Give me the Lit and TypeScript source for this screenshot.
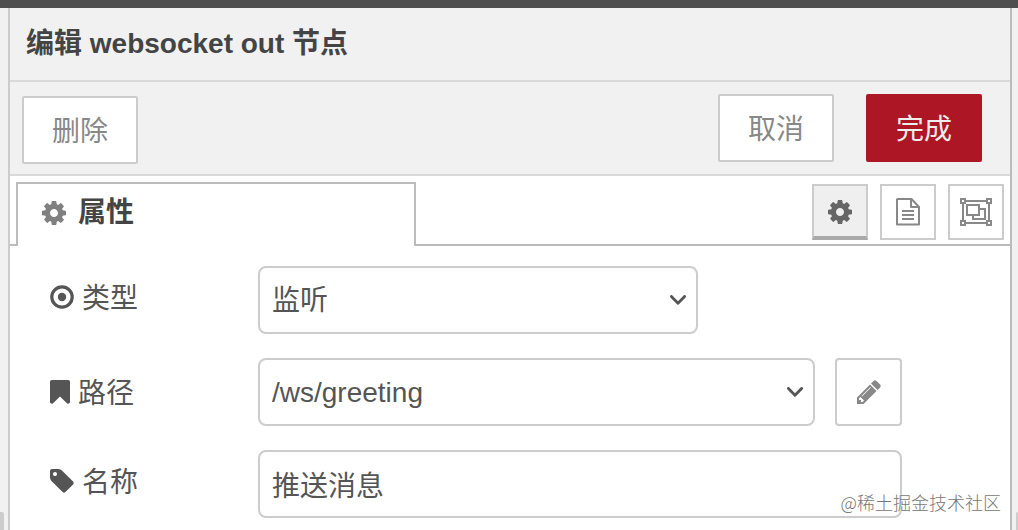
import { LitElement, html, css, svg } from "lit";
import { customElement, property, state } from "lit/decorators.js";

const cog = svg`<path d="M1152 896q0-106-75-181t-181-75-181 75-75 181 75 181 181 75 181-75 75-181zm512-109v222q0 12-8 23t-20 13l-185 28q-19 54-39 91 35 50 107 138 10 12 10 25t-9 23q-27 37-99 108t-94 71q-12 0-26-9l-138-108q-44 23-91 38-16 136-29 186-7 28-36 28h-222q-14 0-24.5-8.5t-11.5-21.5l-28-184q-49-16-90-37l-141 107q-10 9-25 9-14 0-25-11-126-114-165-168-7-10-7-23 0-12 8-23 15-21 51-66.5t54-70.5q-27-50-41-99l-183-27q-13-2-21-12.5t-8-23.5v-222q0-12 8-23t19-13l186-28q14-46 39-92-40-57-107-138-10-12-10-24 0-10 9-23 26-36 98.5-107.5t94.5-71.5q13 0 26 10l138 107q44-23 91-38 16-136 29-186 7-28 36-28h222q14 0 24.5 8.5t11.5 21.5l28 184q49 16 90 37l142-107q9-9 24-9 13 0 25 10 129 119 165 170 7 8 7 22 0 12-8 23-15 21-51 66.5t-54 70.5q26 50 41 98l183 28q13 2 21 12.5t8 23.5z"/>`;

const icons: Record<string, { box: string; w: number; h: number; body: unknown }> = {
  cog: { box: "128 128 1536 1536", w: 24, h: 24, body: cog },
  target: {
    box: "0 0 24 24", w: 24, h: 24,
    body: svg`<circle cx="12" cy="12" r="10.2" fill="none" stroke="currentColor" stroke-width="3.2"/><circle cx="12" cy="12" r="4.2"/>`,
  },
  bookmark: {
    box: "256 128 1280 1536", w: 20, h: 24,
    body: svg`<path d="M1420 128q23 0 44 9 33 13 52.5 41t19.5 62v1289q0 34-19.5 62t-52.5 41q-19 8-44 8-48 0-83-32l-441-424-441 424q-36 33-83 33-23 0-44-9-33-13-52.5-41t-19.5-62v-1289q0-34 19.5-62t52.5-41q21-9 44-9h1048z"/>`,
  },
  tag: {
    box: "128 128 1536 1536", w: 24, h: 24,
    body: svg`<path d="M576 448q0-53-37.5-90.5t-90.5-37.5-90.5 37.5-37.5 90.5 37.5 90.5 90.5 37.5 90.5-37.5 37.5-90.5zm1067 576q0 53-37 90l-491 492q-39 37-91 37-53 0-90-37l-715-716q-38-37-64.5-101t-26.5-117v-416q0-52 38-90t90-38h416q53 0 117 26.5t102 64.5l715 714q37 39 37 91z"/>`,
  },
  pencil: {
    box: "128 128 1536 1536", w: 24, h: 24,
    body: svg`<path d="M491 1536l91-91-235-235-91 91v107h128v128h107zm523-928q0-22-22-22-10 0-17 7l-542 542q-7 7-7 17 0 22 22 22 10 0 17-7l542-542q7-7 7-17zm-54-192l416 416-832 832h-416v-416zm683 96q0 53-37 90l-166 166-416-416 166-165q36-38 90-38 53 0 91 38l235 234q37 39 37 91z"/>`,
  },
  file: {
    box: "0 0 24 28", w: 24, h: 28,
    body: svg`<path fill="none" stroke="currentColor" stroke-width="2" stroke-linejoin="round" d="M1 1.5V26.5H23V9L15.5 1H1.5zM15 1.5V9H22.5"/><path d="M6 12h12v2H6zM6 16h12v2H6zM6 20h12v2H6z"/>`,
  },
  group: {
    box: "0 0 32 28", w: 32, h: 28,
    body: svg`<g fill="none" stroke="currentColor" stroke-width="2"><path d="M6 3H26M6 25H26M3 6V22M29 6V22"/><path d="M1 1h4v4H1zM27 1h4v4h-4zM1 23h4v4H1zM27 23h4v4h-4z"/><path d="M7 7H19V17H7zM19 11H25V21H13V17"/></g>`,
  },
  chevron: {
    box: "0 0 16 10", w: 16, h: 10,
    body: svg`<path fill="none" stroke="currentColor" stroke-width="2.8" stroke-linecap="round" stroke-linejoin="round" d="M1.4 1.4L8 8.2L14.6 1.4"/>`,
  },
};

@customElement("ui-icon")
class UiIcon extends LitElement {
  @property() name = "cog";

  static styles = css`
    :host { display: inline-flex; flex: none; }
    svg { display: block; fill: currentColor; }
  `;

  render() {
    const i = icons[this.name];
    return html`<svg width=${i.w} height=${i.h} viewBox=${i.box} aria-hidden="true">${i.body}</svg>`;
  }
}

@customElement("app-root")
class AppRoot extends LitElement {
  @state() private panel = "properties";

  static styles = css`
    :host {
      display: flex;
      flex-direction: column;
      position: relative;
      height: 100vh;
      overflow: hidden;
      box-sizing: border-box;
      border-top: 8px solid #4f4f4f;
      background: #f1f1f1;
      color: #555;
      font-family: "Liberation Sans", "Noto Sans CJK SC", sans-serif;
      font-size: 28px;
      line-height: 40px;
      font-weight: 400;
    }
    * { box-sizing: border-box; }
    button, select, input { font: inherit; color: inherit; margin: 0; }
    .workspace { flex: 1; display: flex; min-height: 0; }
    .gutter { flex: none; display: flex; flex-direction: column; justify-content: flex-end; }
    .left { width: 8px; }
    .right { width: 6px; align-items: flex-end; }
    .edge { width: 4px; height: 18px; background: #ccc; border-radius: 0 2px 0 0; }
    .right .edge { width: 2px; }
    .tray {
      flex: 1;
      min-width: 0;
      display: flex;
      flex-direction: column;
      border-left: 2px solid #ccc;
      border-right: 2px solid #bbb;
      background: #fff;
    }
    .title {
      flex: none;
      margin: 0;
      padding: 16px;
      font-size: 28px;
      font-weight: 700;
      color: #444;
      background: #f1f1f1;
      border-bottom: 2px solid #d9d9d9;
    }
    .toolbar {
      flex: none;
      display: flex;
      justify-content: space-between;
      min-height: 94px;
      padding: 12px 28px 10px 12px;
      background: #f1f1f1;
      border-bottom: 2px solid #d9d9d9;
    }
    .remove { align-self: flex-end; }
    .actions { display: flex; gap: 32px; align-items: flex-start; }
    .btn {
      width: 116px;
      height: 68px;
      padding: 4px 0 0;
      border: 2px solid #ccc;
      border-radius: 2px;
      background: #fff;
      color: #888;
    }
    .primary { background: #ad1625; border-color: #ad1625; color: #eee; }
    .tabs { flex: none; display: flex; height: 70px; padding-top: 6px; }
    .lead { width: 6px; border-bottom: 2px solid #bbb; }
    .tab {
      display: flex;
      align-items: center;
      gap: 12px;
      width: 400px;
      padding: 0 24px 4px;
      border: 2px solid #bbb;
      border-bottom: 0;
      background: #fff;
      color: #444;
      font-weight: 700;
    }
    .tab ui-icon { color: #808080; }
    .tools {
      flex: 1;
      display: flex;
      justify-content: flex-end;
      gap: 12px;
      padding: 2px 6px 0 0;
      border-bottom: 2px solid #bbb;
    }
    .tool {
      display: flex;
      align-items: center;
      justify-content: center;
      width: 56px;
      height: 56px;
      padding: 0;
      border: 2px solid #ccc;
      background: #fff;
      color: #888;
    }
    .tool.on { background: #efefef; border-bottom: 4px solid #aaa; color: #666; padding-top: 2px; }
    .form { display: flex; flex-direction: column; gap: 24px; padding: 20px 40px; }
    .row { display: flex; align-items: center; }
    .label {
      flex: none;
      display: flex;
      align-items: center;
      gap: 8px;
      width: 208px;
      padding-bottom: 6px;
    }
    .label span { padding-top: 4px; }
    .compound .label { padding-bottom: 0; }
    .control { display: flex; gap: 20px; width: 70%; }
    .picker { flex: 1; display: grid; align-items: center; }
    .short { flex: 0 1 440px; }
    .picker > * { grid-area: 1 / 1; }
    .picker ui-icon { justify-self: end; margin-right: 12px; pointer-events: none; }
    .field {
      width: 100%;
      height: 68px;
      padding: 0 12px;
      border: 2px solid #ccc;
      border-radius: 8px;
      background: #fff;
      appearance: none;
      outline: 0;
    }
    select.field { padding-top: 2px; }
    .edit {
      display: flex;
      align-items: center;
      justify-content: center;
      flex: none;
      width: 67px;
      height: 68px;
      padding: 0;
      border: 2px solid #ccc;
      border-radius: 4px;
      background: #fff;
      color: #888;
    }
    .mark {
      position: absolute;
      right: 17px;
      bottom: 14px;
      font: 300 18px/28px "Noto Sans CJK SC", sans-serif;
      color: #777;
      text-shadow: 0 0 2px #fff;
    }
  `;

  private tool(id: string, icon: string, label: string) {
    return html`<button
      class="tool ${this.panel === id ? "on" : ""}"
      aria-label=${label}
      @click=${() => (this.panel = id)}
    ><ui-icon name=${icon}></ui-icon></button>`;
  }

  render() {
    return html`
      <div class="workspace">
        <div class="gutter left"><div class="edge"></div></div>
        <main class="tray">
          <h1 class="title">编辑 websocket out 节点</h1>
          <div class="toolbar">
            <button class="btn remove">删除</button>
            <div class="actions">
              <button class="btn">取消</button>
              <button class="btn primary">完成</button>
            </div>
          </div>
          <div class="tabs">
            <div class="lead"></div>
            <div class="tab"><ui-icon name="cog"></ui-icon><span>属性</span></div>
            <div class="tools">
              ${this.tool("properties", "cog", "属性")}
              ${this.tool("description", "file", "描述")}
              ${this.tool("appearance", "group", "外观")}
            </div>
          </div>
          <form class="form" @submit=${(e: Event) => e.preventDefault()}>
            <div class="row">
              <label class="label" for="type"><ui-icon name="target"></ui-icon><span>类型</span></label>
              <div class="control">
                <div class="picker short">
                  <select class="field" id="type"><option>监听</option></select>
                  <ui-icon name="chevron"></ui-icon>
                </div>
              </div>
            </div>
            <div class="row compound">
              <label class="label" for="path"><ui-icon name="bookmark"></ui-icon><span>路径</span></label>
              <div class="control">
                <div class="picker">
                  <select class="field" id="path"><option>/ws/greeting</option></select>
                  <ui-icon name="chevron"></ui-icon>
                </div>
                <button class="edit" type="button" aria-label="编辑"><ui-icon name="pencil"></ui-icon></button>
              </div>
            </div>
            <div class="row">
              <label class="label" for="name"><ui-icon name="tag"></ui-icon><span>名称</span></label>
              <div class="control">
                <input class="field" id="name" type="text" value="推送消息" />
              </div>
            </div>
          </form>
        </main>
        <div class="gutter right"><div class="edge"></div></div>
      </div>
      <div class="mark">@稀土掘金技术社区</div>
    `;
  }
}
